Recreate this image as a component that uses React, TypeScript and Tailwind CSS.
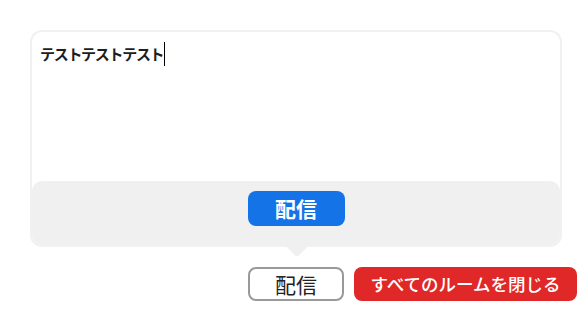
import React from "react";

export default function App() {
  const font = { fontFamily: '"Noto Sans CJK JP", "Noto Sans", sans-serif' };
  return (
    <div className="w-[582px] h-[310px] bg-white pt-[30px] pl-[30px] pr-[5px]" style={font}>
      <div className="relative w-[532px] h-[217px] rounded-[12px] border-2 border-[#f1f1f1] bg-white flex flex-col">
        <div className="flex-1 px-[8px] pt-[10px]">
          <div className="flex items-center h-[24px] text-[15px] tracking-[-1.3px] font-bold text-[#1e1e1e] leading-[24px]">
            <span>テストテストテスト</span>
            <span className="ml-[1px] w-[1px] h-[24px] bg-black" />
          </div>
        </div>
        <div className="h-[64px] bg-[#f0f0f0] rounded-[10px] flex justify-center pt-[10px]">
          <button className="w-[97px] h-[35px] rounded-[8px] bg-[#1473e6] text-white text-[21px] font-bold leading-none flex items-center justify-center">
            配信
          </button>
        </div>
        <div className="absolute left-[257px] bottom-[-9px] w-[16px] h-[16px] rotate-45 rounded-[3px] bg-[#f0f0f0]" />
      </div>
      <div className="flex justify-end gap-[10px] mt-[20px]">
        <button className="w-[96px] h-[34px] rounded-[8px] border-2 border-[#999999] bg-white text-[#222] text-[21px] leading-none flex items-center justify-center">
          配信
        </button>
        <button className="w-[223px] h-[34px] rounded-[8px] bg-[#e02828] text-white text-[17.5px] font-medium leading-none flex items-center justify-center">
          すべてのルームを閉じる
        </button>
      </div>
    </div>
  );
}
